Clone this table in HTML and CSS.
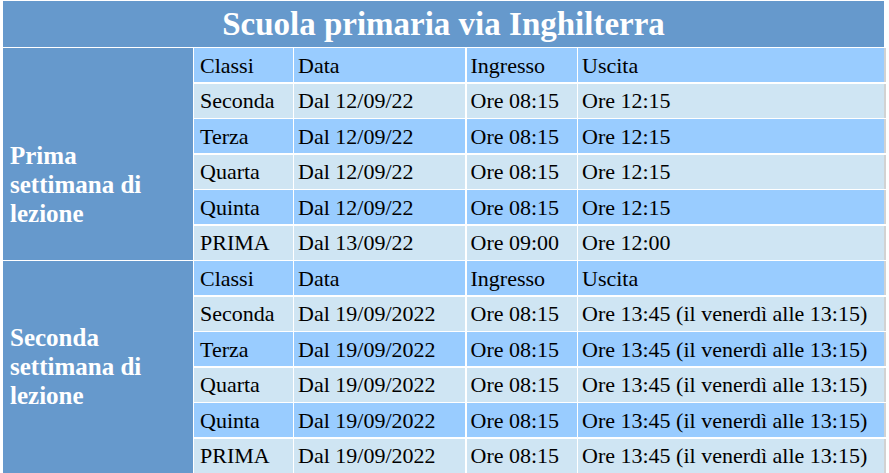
FILE: index.html
```html
<!DOCTYPE html>
<html lang="it">
<head>
<meta charset="utf-8">
<title>Scuola primaria via Inghilterra</title>
<link rel="stylesheet" href="styles.css">
</head>
<body>
<div class="sched">
  <div class="title">Scuola primaria via Inghilterra</div>

  <div class="label label-1">Prima<br>settimana di<br>lezione</div>
  <div class="label label-2">Seconda<br>settimana di<br>lezione</div>

  <div class="c bl c1">Classi</div><div class="c bl">Data</div><div class="c bl">Ingresso</div><div class="c bl last">Uscita</div>
  <div class="c lt c1">Seconda</div><div class="c lt">Dal 12/09/22</div><div class="c lt">Ore 08:15</div><div class="c lt last">Ore 12:15</div>
  <div class="c bl c1">Terza</div><div class="c bl">Dal 12/09/22</div><div class="c bl">Ore 08:15</div><div class="c bl last">Ore 12:15</div>
  <div class="c lt c1">Quarta</div><div class="c lt">Dal 12/09/22</div><div class="c lt">Ore 08:15</div><div class="c lt last">Ore 12:15</div>
  <div class="c bl c1">Quinta</div><div class="c bl">Dal 12/09/22</div><div class="c bl">Ore 08:15</div><div class="c bl last">Ore 12:15</div>
  <div class="c lt c1">PRIMA</div><div class="c lt">Dal 13/09/22</div><div class="c lt">Ore 09:00</div><div class="c lt last">Ore 12:00</div>

  <div class="c bl c1">Classi</div><div class="c bl">Data</div><div class="c bl">Ingresso</div><div class="c bl last">Uscita</div>
  <div class="c lt c1">Seconda</div><div class="c lt">Dal 19/09/2022</div><div class="c lt">Ore 08:15</div><div class="c lt last">Ore 13:45 (il venerdì alle 13:15)</div>
  <div class="c bl c1">Terza</div><div class="c bl">Dal 19/09/2022</div><div class="c bl">Ore 08:15</div><div class="c bl last">Ore 13:45 (il venerdì alle 13:15)</div>
  <div class="c lt c1">Quarta</div><div class="c lt">Dal 19/09/2022</div><div class="c lt">Ore 08:15</div><div class="c lt last">Ore 13:45 (il venerdì alle 13:15)</div>
  <div class="c bl c1">Quinta</div><div class="c bl">Dal 19/09/2022</div><div class="c bl">Ore 08:15</div><div class="c bl last">Ore 13:45 (il venerdì alle 13:15)</div>
  <div class="c lt c1">PRIMA</div><div class="c lt">Dal 19/09/2022</div><div class="c lt">Ore 08:15</div><div class="c lt last">Ore 13:45 (il venerdì alle 13:15)</div>
</div>
</body>
</html>
```
FILE: styles.css
```css
html, body {
  margin: 0;
  padding: 0;
  background: #ffffff;
  overflow: hidden;
}

body {
  padding: 1px 0 0 3px;
  font-family: "Liberation Serif", "Times New Roman", serif;
}

.sched {
  display: grid;
  width: 881px;
  grid-template-columns: 189.5px 98.5px 171px 110px 306px;
  grid-template-rows: 45.5px repeat(12, 34px);
  gap: 1.5px;
  background: #ffffff;
}

.title {
  grid-column: 1 / -1;
  grid-row: 1;
  background: #6699cc;
  color: #ffffff;
  font-weight: bold;
  font-size: 33px;
  display: flex;
  align-items: center;
  justify-content: center;
  padding-top: 1px;
}

.label {
  grid-column: 1;
  background: #6699cc;
  color: #ffffff;
  font-weight: bold;
  font-size: 25px;
  line-height: 29px;
  display: flex;
  align-items: center;
  padding-left: 7px;
}

.label-1 {
  grid-row: 2 / span 6;
  padding-top: 61px;
}

.label-2 {
  grid-row: 8 / span 6;
}

.c {
  display: flex;
  align-items: center;
  padding: 1px 0 0 4px;
  font-size: 22px;
  color: #000000;
  white-space: nowrap;
}

.c1 {
  padding-left: 6px;
}

.bl {
  background: #99ccff;
}

.lt {
  background: #cfe5f3;
}

.last {
  box-shadow: 2px 0 0 #d2d2d2;
}
```
